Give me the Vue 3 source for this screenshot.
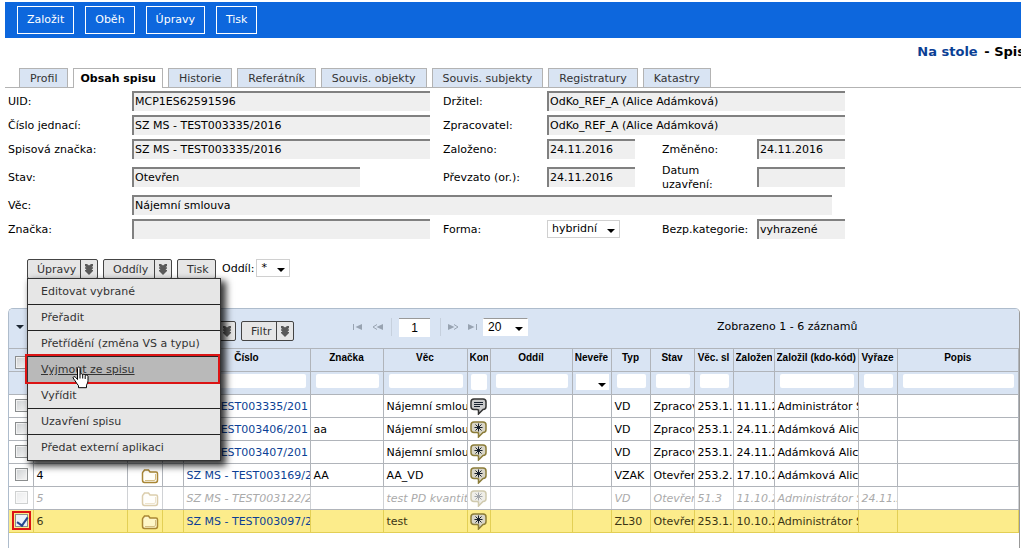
<script setup>
import { ref } from 'vue'

const actions = ['Založit', 'Oběh', 'Úpravy', 'Tisk']
const tabs = ['Profil', 'Obsah spisu', 'Historie', 'Referátník', 'Souvis. objekty', 'Souvis. subjekty', 'Registratury', 'Katastry']
const activeTab = ref('Obsah spisu')
const chevrons = 'M1 1h2l2 1.500L7 1h2v2L7.500 4.300 9 4.300v1L7.500 7 9 7v1L5 12 1 8V7h1.500L1 5.300v-1h1.500L1 3z'

const fields = [
  { id: 'uid', label: 'UID:', value: 'MCP1ES62591596', size: 'wide' },
  { id: 'drzitel', label: 'Držitel:', value: 'OdKo_REF_A (Alice Adámková)', size: 'span3' },
  { id: 'cislo', label: 'Číslo jednací:', value: 'SZ MS - TEST003335/2016', size: 'wide' },
  { id: 'zprac', label: 'Zpracovatel:', value: 'OdKo_REF_A (Alice Adámková)', size: 'span3' },
  { id: 'spzn', label: 'Spisová značka:', value: 'SZ MS - TEST003335/2016', size: 'wide' },
  { id: 'zalozeno', label: 'Založeno:', value: '24.11.2016', size: 'date' },
  { id: 'zmeneno', label: 'Změněno:', value: '24.11.2016', size: 'date' },
  { id: 'stav', label: 'Stav:', value: 'Otevřen', size: 'medium' },
  { id: 'prevzato', label: 'Převzato (or.):', value: '24.11.2016', size: 'date' },
  { id: 'uzavreni', label: 'Datum uzavření:', value: '', size: 'date' },
  { id: 'vec', label: 'Věc:', value: 'Nájemní smlouva', size: 'full' },
  { id: 'znacka', label: 'Značka:', value: '', size: 'wide' },
  { id: 'forma', label: 'Forma:', value: 'hybridní', size: 'select' },
  { id: 'bezp', label: 'Bezp.kategorie:', value: 'vyhrazené', size: 'date' }
]

const menu = ['Editovat vybrané', 'Přeřadit', 'Přetřídění (změna VS a typu)', 'Vyjmout ze spisu', 'Vyřídit', 'Uzavření spisu', 'Předat externí aplikaci']

const columns = [
  { key: 'sel', head: '', cls: 'c-sel', filter: '' },
  { key: 'no', head: '', cls: 'c-no', filter: '' },
  { key: 'folder', head: '', cls: 'c-folder', filter: '' },
  { key: 'gap', head: '', cls: 'c-gap', filter: '' },
  { key: 'cislo', head: 'Číslo', cls: 'c-cislo', filter: 'text' },
  { key: 'znacka', head: 'Značka', cls: 'c-znacka', filter: 'text' },
  { key: 'vec', head: 'Věc', cls: 'c-vec', filter: 'text' },
  { key: 'kon', head: 'Kon', cls: 'c-kon', filter: 'small' },
  { key: 'oddil', head: 'Oddíl', cls: 'c-oddil', filter: 'text' },
  { key: 'never', head: 'Neveře', cls: 'c-39', filter: 'select' },
  { key: 'typ', head: 'Typ', cls: 'c-39', filter: 'text' },
  { key: 'stav', head: 'Stav', cls: 'c-stav', filter: 'text' },
  { key: 'skupina', head: 'Věc. sl', cls: 'c-39', filter: 'text' },
  { key: 'zalozen', head: 'Založen', cls: 'c-zalozen', filter: '' },
  { key: 'zalozil', head: 'Založil (kdo-kód)', cls: 'c-vec', filter: 'text' },
  { key: 'vyrazen', head: 'Vyřaze', cls: 'c-39', filter: 'text' },
  { key: 'popis', head: 'Popis', cls: 'c-popis', filter: 'text' }
]

const rows = ref([
  { no: '1', cislo: 'MS - TEST003335/201', znacka: '', vec: 'Nájemní smlou', kon: 'lines', typ: 'VD', stav: 'Zpracov', skupina: '253.1.', zalozen: '11.11.2', zalozil: 'Administrátor S', vyrazen: '' },
  { no: '2', cislo: 'MS - TEST003406/201', znacka: 'aa', vec: 'Nájemní smlou', kon: 'star', typ: 'VD', stav: 'Zpracov', skupina: '253.1.', zalozen: '24.11.2', zalozil: 'Adámková Alic', vyrazen: '' },
  { no: '3', cislo: 'MS - TEST003407/201', znacka: '', vec: 'Nájemní smlou', kon: 'star', typ: 'VD', stav: 'Zpracov', skupina: '253.1.', zalozen: '24.11.2', zalozil: 'Adámková Alic', vyrazen: '' },
  { no: '4', cislo: 'SZ MS - TEST003169/2', znacka: 'AA', vec: 'AA_VD', kon: 'star', typ: 'VZAK', stav: 'Otevřen', skupina: '253.2.', zalozen: '17.10.2', zalozil: 'Adámková Alic', vyrazen: '' },
  { no: '5', cislo: 'SZ MS - TEST003122/20', znacka: '', vec: 'test PD kvantita', kon: 'star', typ: 'VD', stav: 'Otevřen', skupina: '51.3', zalozen: '11.10.2', zalozil: 'Administrátor S', vyrazen: '24.11.2', off: true },
  { no: '6', cislo: 'SZ MS - TEST003097/2', znacka: '', vec: 'test', kon: 'star', typ: 'ZL30', stav: 'Otevřen', skupina: '253.1.', zalozen: '10.10.2', zalozil: 'Administrátor S', vyrazen: '', on: true }
])
</script>

<template>
  <div class="page">
    <header class="topbar">
      <button v-for="a in actions" :key="a" type="button">{{ a }}</button>
    </header>

    <h1 class="title"><a href="#">Na stole</a><span>&nbsp;- Spis</span></h1>

    <nav class="tabs">
      <button v-for="t in tabs" :key="t" type="button" :class="{ active: t === activeTab }" @click="activeTab = t">{{ t }}</button>
    </nav>

    <form class="details" @submit.prevent>
      <template v-for="f in fields" :key="f.id">
        <label :for="f.id">{{ f.label }}</label>
        <span v-if="f.size === 'select'" class="combo forma">
          <select :id="f.id"><option>{{ f.value }}</option></select>
        </span>
        <input v-else :id="f.id" type="text" readonly :class="f.size" :value="f.value">
      </template>
    </form>

    <div class="toolbar">
      <div class="dropdown">
        <button type="button" class="split upravy"><span>Úpravy</span><i><svg viewBox="0 0 10 12"><path :d="chevrons" /></svg></i></button>
        <ul class="menu">
          <li v-for="m in menu" :key="m" :class="{ hot: m === 'Vyjmout ze spisu' }">
            <a href="#">{{ m }}</a>
            <svg v-if="m === 'Vyjmout ze spisu'" class="hand" viewBox="0 0 18 23">
              <path d="M5.500 13.500V2.500c0-1 .5-1.500 1.200-1.500s1.300.5 1.300 1.500v6c.3-1.200 2.500-1 2.700.3.600-.9 2.300-.6 2.500.6.700-.8 2.600-.4 2.800 1v4.300c0 2-1 3-1.500 4.500v2.500h-8v-2c-1-1.500-2.500-3-3.500-5-.7-1.200-1.700-2-2-3 .3-1.400 1.900-1.300 2.700-.3z" />
              <path d="M8 8.500v4M10.700 9v3.500M13.200 9.700V13" />
            </svg>
          </li>
        </ul>
      </div>
      <button type="button" class="split oddily"><span>Oddíly</span><i><svg viewBox="0 0 10 12"><path :d="chevrons" /></svg></i></button>
      <button type="button" class="split tisk"><span>Tisk</span></button>
      <label for="oddil">Oddíl:</label>
      <span class="combo star"><select id="oddil"><option>*</option></select></span>
    </div>

    <section class="panel">
      <div class="panel-bar">
        <div class="tools">
          <button type="button" class="fold" aria-label="Sbalit"></button>
          <button type="button" class="split akce" aria-label="Akce"><i><svg viewBox="0 0 10 12"><path :d="chevrons" /></svg></i></button>
          <button type="button" class="split filtr"><span>Filtr</span><i><svg viewBox="0 0 10 12"><path :d="chevrons" /></svg></i></button>
        </div>
        <div class="pager">
          <button type="button" class="nav" aria-label="První"><svg viewBox="0 0 12 8"><path class="ln" d="M1.500 1v6" /><path d="M10 1v6L3.500 4z" /></svg></button>
          <button type="button" class="nav" aria-label="Předchozí"><svg viewBox="0 0 12 8"><path class="ln" d="M5 1.500L1 4l4 2.500" /><path d="M11 1v6L4.500 4z" /></svg></button>
          <span class="bar"></span>
          <input type="text" value="1" aria-label="Strana">
          <span class="bar"></span>
          <button type="button" class="nav" aria-label="Další"><svg viewBox="0 0 12 8"><path d="M1 1v6l6.500-3z" /><path class="ln" d="M7 1.500L11 4 7 6.500" /></svg></button>
          <button type="button" class="nav" aria-label="Poslední"><svg viewBox="0 0 12 8"><path d="M2 1v6l6.500-3z" /><path class="ln" d="M10.500 1v6" /></svg></button>
          <span class="combo count"><select aria-label="Počet na stránku"><option>20</option></select></span>
        </div>
        <p class="summary">Zobrazeno 1 - 6 záznamů</p>
      </div>

      <table>
        <colgroup>
          <col v-for="c in columns" :key="c.key" :class="c.cls">
        </colgroup>
        <thead>
          <tr>
            <th v-for="c in columns" :key="c.key">
              <input v-if="c.key === 'sel'" type="checkbox" aria-label="Vybrat vše">
              <div v-else>{{ c.head }}</div>
            </th>
          </tr>
          <tr class="filters">
            <td v-for="c in columns" :key="c.key">
              <span v-if="c.filter === 'select'" class="combo mini"><select :aria-label="c.head"><option></option></select></span>
              <input v-else-if="c.filter" type="text" :class="c.filter" :aria-label="c.head">
            </td>
          </tr>
        </thead>
        <tbody>
          <tr v-for="r in rows" :key="r.no" :class="{ off: r.off, on: r.on }">
            <td v-for="c in columns" :key="c.key">
              <input v-if="c.key === 'sel'" v-model="r.on" type="checkbox" :disabled="r.off" :aria-label="'Vybrat ' + r.no">
              <svg v-else-if="c.key === 'folder'" class="folder" viewBox="0 0 18 15">
                <path class="back" d="M1.500 11V4q0-1 1-1.500l1-1.500h4l1.500 2h6q1.500 0 1.500 1.500V11q0 2.500-2 2.500H3.500q-2 0-2-2.500z" />
                <path class="fold-line" d="M4 11.500h9q1.500 0 1.500-1.500V5" />
              </svg>
              <svg v-else-if="c.key === 'kon'" class="bubble" :class="r.kon" viewBox="0 0 17 17">
                <path class="shape" d="M4 1h9q3 0 3 3v4.500q0 3-3 3L8.500 16v-4l-1.500-.5H4q-3 0-3-3V4q0-3 3-3z" />
                <path v-if="r.kon === 'lines'" class="ink" d="M4 4.500h9M4 6.500h9M4 8.500h6" />
                <path v-else class="ink" d="M8.500 2.500v8M4.500 6.500h8M5.500 3.500l6 6M11.500 3.500l-6 6" />
              </svg>
              <a v-else-if="c.key === 'cislo'" href="#">{{ r.cislo }}</a>
              <template v-else>{{ r[c.key] }}</template>
            </td>
          </tr>
        </tbody>
      </table>
    </section>
  </div>
</template>

<style>
body {
  margin: 0;
  background: #fff;
}
</style>

<style scoped>
* {
  box-sizing: border-box;
}

.page {
  display: flex;
  flex-direction: column;
  height: 100vh;
  padding: 2px 0 0 5px;
  overflow: hidden;
  font: 11px/14px Verdana, "DejaVu Sans", sans-serif;
  color: #000;
}

button,
input,
select {
  margin: 0;
  padding: 0;
  border: 0;
  border-radius: 0;
  font: inherit;
  color: inherit;
  background: none;
}

a {
  color: #0b3f95;
  text-decoration: none;
}

.topbar {
  display: flex;
  flex: none;
  gap: 11px;
  height: 36px;
  padding: 4px 12px;
  background: #0d67dd;
}

.topbar button {
  height: 28px;
  padding: 0 9px;
  border: 1px solid #fff;
  color: #fff;
}

.title {
  display: flex;
  flex: none;
  justify-content: flex-end;
  gap: 2px;
  height: 30px;
  margin: 0 -4px 0 0;
  padding-top: 6px;
  font-size: 13px;
  line-height: 16px;
  white-space: nowrap;
}

.tabs {
  display: flex;
  flex: none;
  gap: 5px;
  height: 20px;
  padding-left: 14px;
  border-bottom: 1px solid #b3b3b3;
}

.tabs button {
  height: 19px;
  padding: 1px 10px 0;
  border: 1px solid #b3b3b3;
  border-bottom: 0;
  color: #333;
  background: #d9e4f3;
}

.tabs .active {
  height: 20px;
  padding: 0 6px;
  font-weight: bold;
  color: #000;
  background: #fff;
}

.details {
  display: grid;
  flex: none;
  grid-template-columns: 124px 311px 104px 115px 95px 88px;
  grid-template-rows: 24px 24px 24px 32px 24px 24px;
  align-items: center;
  padding: 1px 0 0 3px;
}

.details label {
  padding: 2px 30px 0 0;
}

.details label[for="bezp"],
.details label[for="prevzato"],
.details label[for="spzn"] {
  padding-right: 0;
  white-space: nowrap;
}

.details input {
  width: 298px;
  height: 20px;
  padding: 0 0 2px 1px;
  border-top: 2px solid #808080;
  border-left: 2px solid #808080;
  background: #efefef;
}

.details .medium {
  width: 228px;
}

.details .date {
  width: 88px;
}

.details .span3 {
  grid-column: span 3;
}

.details .full {
  grid-column: span 5;
  width: 700px;
}

.combo {
  display: inline-block;
  position: relative;
  height: 18px;
  border: 1px solid #d0d0d0;
  background: #fff;
}

.combo::after {
  content: "";
  position: absolute;
  right: 4px;
  bottom: 4px;
  border: 4px solid transparent;
  border-top-color: #000;
  border-bottom-width: 0;
  pointer-events: none;
}

.combo select {
  display: block;
  width: 100%;
  height: 100%;
  padding-left: 4px;
  appearance: none;
  outline: 0;
}

.forma {
  width: 73px;
}

.star {
  width: 34px;
}

.toolbar {
  display: flex;
  flex: none;
  height: 20px;
  margin: 18px 0 29px;
  padding-left: 22px;
}

.split {
  display: flex;
  flex: none;
  align-items: center;
  justify-content: space-between;
  height: 20px;
  border: 1px solid #444;
  border-radius: 2px;
  color: #333;
  background: #e6e6e6;
}

.split span {
  padding: 2px 0 0 9px;
}

.split i {
  display: flex;
  align-items: center;
  justify-content: center;
  width: 17px;
  height: 18px;
  margin-left: auto;
  border-left: 1px solid #444;
}

.split svg {
  width: 10px;
  height: 12px;
  fill: #5a5a5a;
}

.upravy {
  width: 71px;
}

.oddily {
  width: 69px;
  margin-left: 5px;
}

.tisk {
  width: 39px;
  margin-left: 5px;
}

.toolbar label {
  padding: 3px 2px 0 6px;
}

.dropdown {
  position: relative;
}

.menu {
  position: absolute;
  z-index: 2;
  top: 19px;
  left: 0;
  width: 194px;
  margin: 0;
  padding: 0;
  border: 1px solid #333;
  list-style: none;
  background: #e6e6e6;
  box-shadow: 4px 4px 7px 1px rgba(0, 0, 0, .8);
}

.menu li {
  position: relative;
  height: 26px;
  border-bottom: 1px solid #222;
}

.menu li:last-child {
  height: 25px;
  border-bottom: 0;
}

.menu a {
  display: block;
  padding: 6px 0 0 13px;
  color: #333;
  white-space: nowrap;
}

.menu .hot {
  background: #b9b9b9;
}

.hot a {
  text-decoration: underline;
}

.hot::after {
  content: "";
  position: absolute;
  inset: -3px 0 -2px -3px;
  border: 2px solid #dc1414;
}

.hand {
  position: absolute;
  z-index: 1;
  top: 9px;
  left: 44px;
  width: 18px;
  height: 23px;
  fill: #fff;
  stroke: #000;
  stroke-width: 1;
}

.panel {
  flex: 1;
  margin: 0 1px 0 3px;
  border: 1px solid #aebccc;
  border-right-color: #999;
  border-bottom: 0;
  border-radius: 5px 5px 0 0;
  background: #fff;
}

.panel-bar {
  display: flex;
  align-items: flex-start;
  height: 39px;
  padding-top: 8px;
  border-radius: 4px 4px 0 0;
  background: #d9e4f3;
}

.tools {
  display: flex;
  flex: none;
  gap: 5px;
  width: 285px;
  padding-top: 4px;
}

.fold {
  width: 8px;
  height: 4px;
  margin: 4px auto 0 7px;
  border: 4px solid transparent;
  border-top-color: #1d2733;
  border-bottom-width: 0;
}

.akce {
  width: 71px;
}

.filtr {
  width: 53px;
}

.pager {
  display: flex;
  flex: none;
  align-items: center;
  width: 234px;
  height: 20px;
  padding-left: 58px;
  font: 12px/14px Arial, "Liberation Sans", sans-serif;
}

.nav {
  display: flex;
  width: 20px;
}

.nav svg {
  width: 12px;
  height: 8px;
  fill: #98a3b1;
}

.ln {
  fill: none;
  stroke: #98a3b1;
}

.bar {
  width: 1px;
  height: 18px;
  background: #c6d0dd;
}

.pager input {
  width: 31px;
  height: 19px;
  margin: 0 10px 0 7px;
  border-top: 1px solid #999;
  text-align: center;
  background: #fff;
}

.bar + .nav {
  margin-left: 6px;
}

.count {
  flex: none;
  width: 45px;
  border-color: #999 #fff #fff;
  margin-left: -3px;
}

.summary {
  margin: 3px 0 0 189px;
  white-space: nowrap;
}

table {
  width: 100%;
  border-collapse: collapse;
  table-layout: fixed;
}

.c-sel { width: 24px; }
.c-no { width: 94px; }
.c-folder { width: 35px; }
.c-gap { width: 21px; }
.c-cislo { width: 127px; }
.c-znacka { width: 73px; }
.c-vec { width: 84px; }
.c-kon { width: 23px; }
.c-oddil { width: 82px; }
.c-39 { width: 39px; }
.c-stav { width: 44px; }
.c-zalozen { width: 41px; }

th,
td {
  height: 23px;
  padding: 2px 0 0 3px;
  border: 1px solid #b0b4ba;
  border-left: 0;
  overflow: hidden;
  text-align: left;
  white-space: nowrap;
  line-height: 14px;
  vertical-align: middle;
}

th {
  padding: 0 2px 4px;
  font: bold 10px/14px Arial, "Liberation Sans", sans-serif;
  text-align: center;
  background: #d9e4f3;
}

th:first-child {
  padding: 4px 2px 0;
}

th div {
  overflow: hidden;
}

th:nth-child(14) div,
th:nth-child(15) div {
  text-align: left;
}

.filters td {
  padding: 2px 4px 0 5px;
  vertical-align: top;
  background: #d9e4f3;
}

.filters input {
  display: block;
  width: 100%;
  height: 14px;
  border-radius: 2px;
  background: #fff;
}

.filters .small {
  width: 16px;
  height: 16px;
  margin-left: -2px;
}

.mini {
  display: block;
  width: 33px;
  height: 16px;
  margin-left: -2px;
  border: 0;
}

.mini::after {
  right: 3px;
  bottom: 3px;
}

input[type="checkbox"] {
  display: block;
  width: 13px;
  height: 13px;
  margin: 0 0 4px 3px;
  border: 1px solid #8a8d8e;
  appearance: none;
  background: linear-gradient(135deg, #cdd0d2, #f6f6f6);
  box-shadow: inset 0 0 0 1px #f2f2f2;
}

th input[type="checkbox"] {
  margin: 0 0 0 4px;
}

.on input[type="checkbox"] {
  outline: 2px solid #dc1414;
  outline-offset: 1px;
  background: #eaf1fb;
}

.on input[type="checkbox"]::after {
  content: "";
  display: block;
  width: 5px;
  height: 9px;
  margin-left: 3px;
  border: solid #26478d;
  border-width: 0 2px 2px 0;
  transform: rotate(35deg);
}

.off td {
  border-color: #b0b4ba #d0d2d5;
  font-style: italic;
  color: #aaa;
}

.off a {
  color: #aaa;
}

.off svg,
.off input {
  opacity: .4;
}

.on td {
  border-color: #e3cf55;
  color: #3b3514;
  background: #fcec8b;
}

.folder {
  display: block;
  width: 18px;
  height: 15px;
  margin-left: 10px;
}

.folder path {
  fill: none;
  stroke: #a98635;
  stroke-width: 1.5;
}

.folder .back {
  fill: #fffdf2;
  fill-opacity: .6;
}

.folder .fold-line {
  stroke: #d5bd83;
  stroke-width: 1;
}

.bubble {
  display: block;
  width: 17px;
  height: 17px;
  margin: 0 0 2px -1px;
}

.shape {
  fill: #d9d6c8;
  stroke: #8b7c38;
  stroke-width: 1.5;
}

.lines .shape {
  fill: #ccc;
  stroke: #333;
}

.ink {
  fill: none;
  stroke: #17202e;
  stroke-width: 1;
}
</style>
